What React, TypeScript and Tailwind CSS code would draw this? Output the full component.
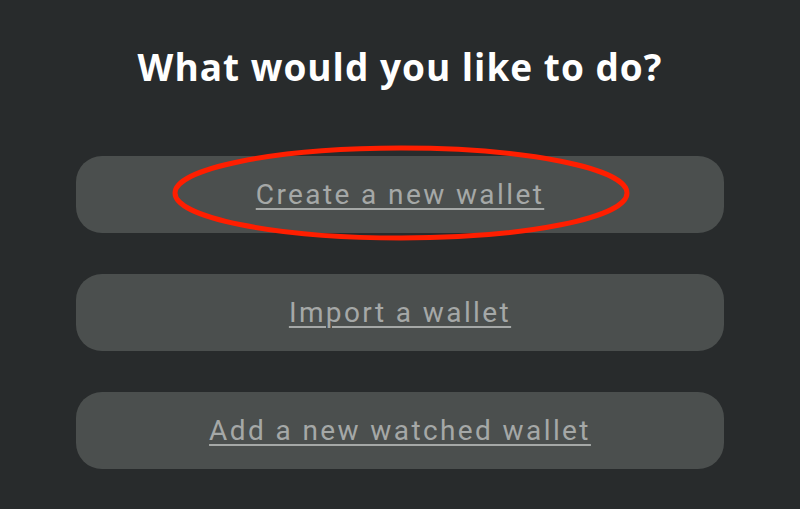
export default function App() {
  const options = ['Create a new wallet', 'Import a wallet', 'Add a new watched wallet']

  return (
    <div className="relative h-[509px] w-[800px] overflow-hidden bg-[#282b2c] font-['Roboto',sans-serif]">
      <h1 className="pt-[44px] text-center font-['Open_Sans',sans-serif] text-[37px] font-bold leading-[46px] tracking-[1px] text-white">
        What would you like to do?
      </h1>

      <div className="mt-[66px] flex flex-col gap-[41px] px-[76px]">
        {options.map((label) => (
          <button
            key={label}
            className="flex h-[77px] items-center justify-center rounded-[26px] bg-[#4b4f4e]"
          >
            <span className="text-[28px] tracking-[2.4px] text-[#a5a8a7] underline decoration-2 underline-offset-4">
              {label}
            </span>
          </button>
        ))}
      </div>

      {/* red annotation ring */}
      <svg className="absolute left-[170px] top-[143px]" width="462" height="100" viewBox="0 0 462 100">
        <ellipse cx="231" cy="50" rx="226" ry="45" fill="none" stroke="#ff1e00" strokeWidth="5" />
      </svg>
    </div>
  )
}
